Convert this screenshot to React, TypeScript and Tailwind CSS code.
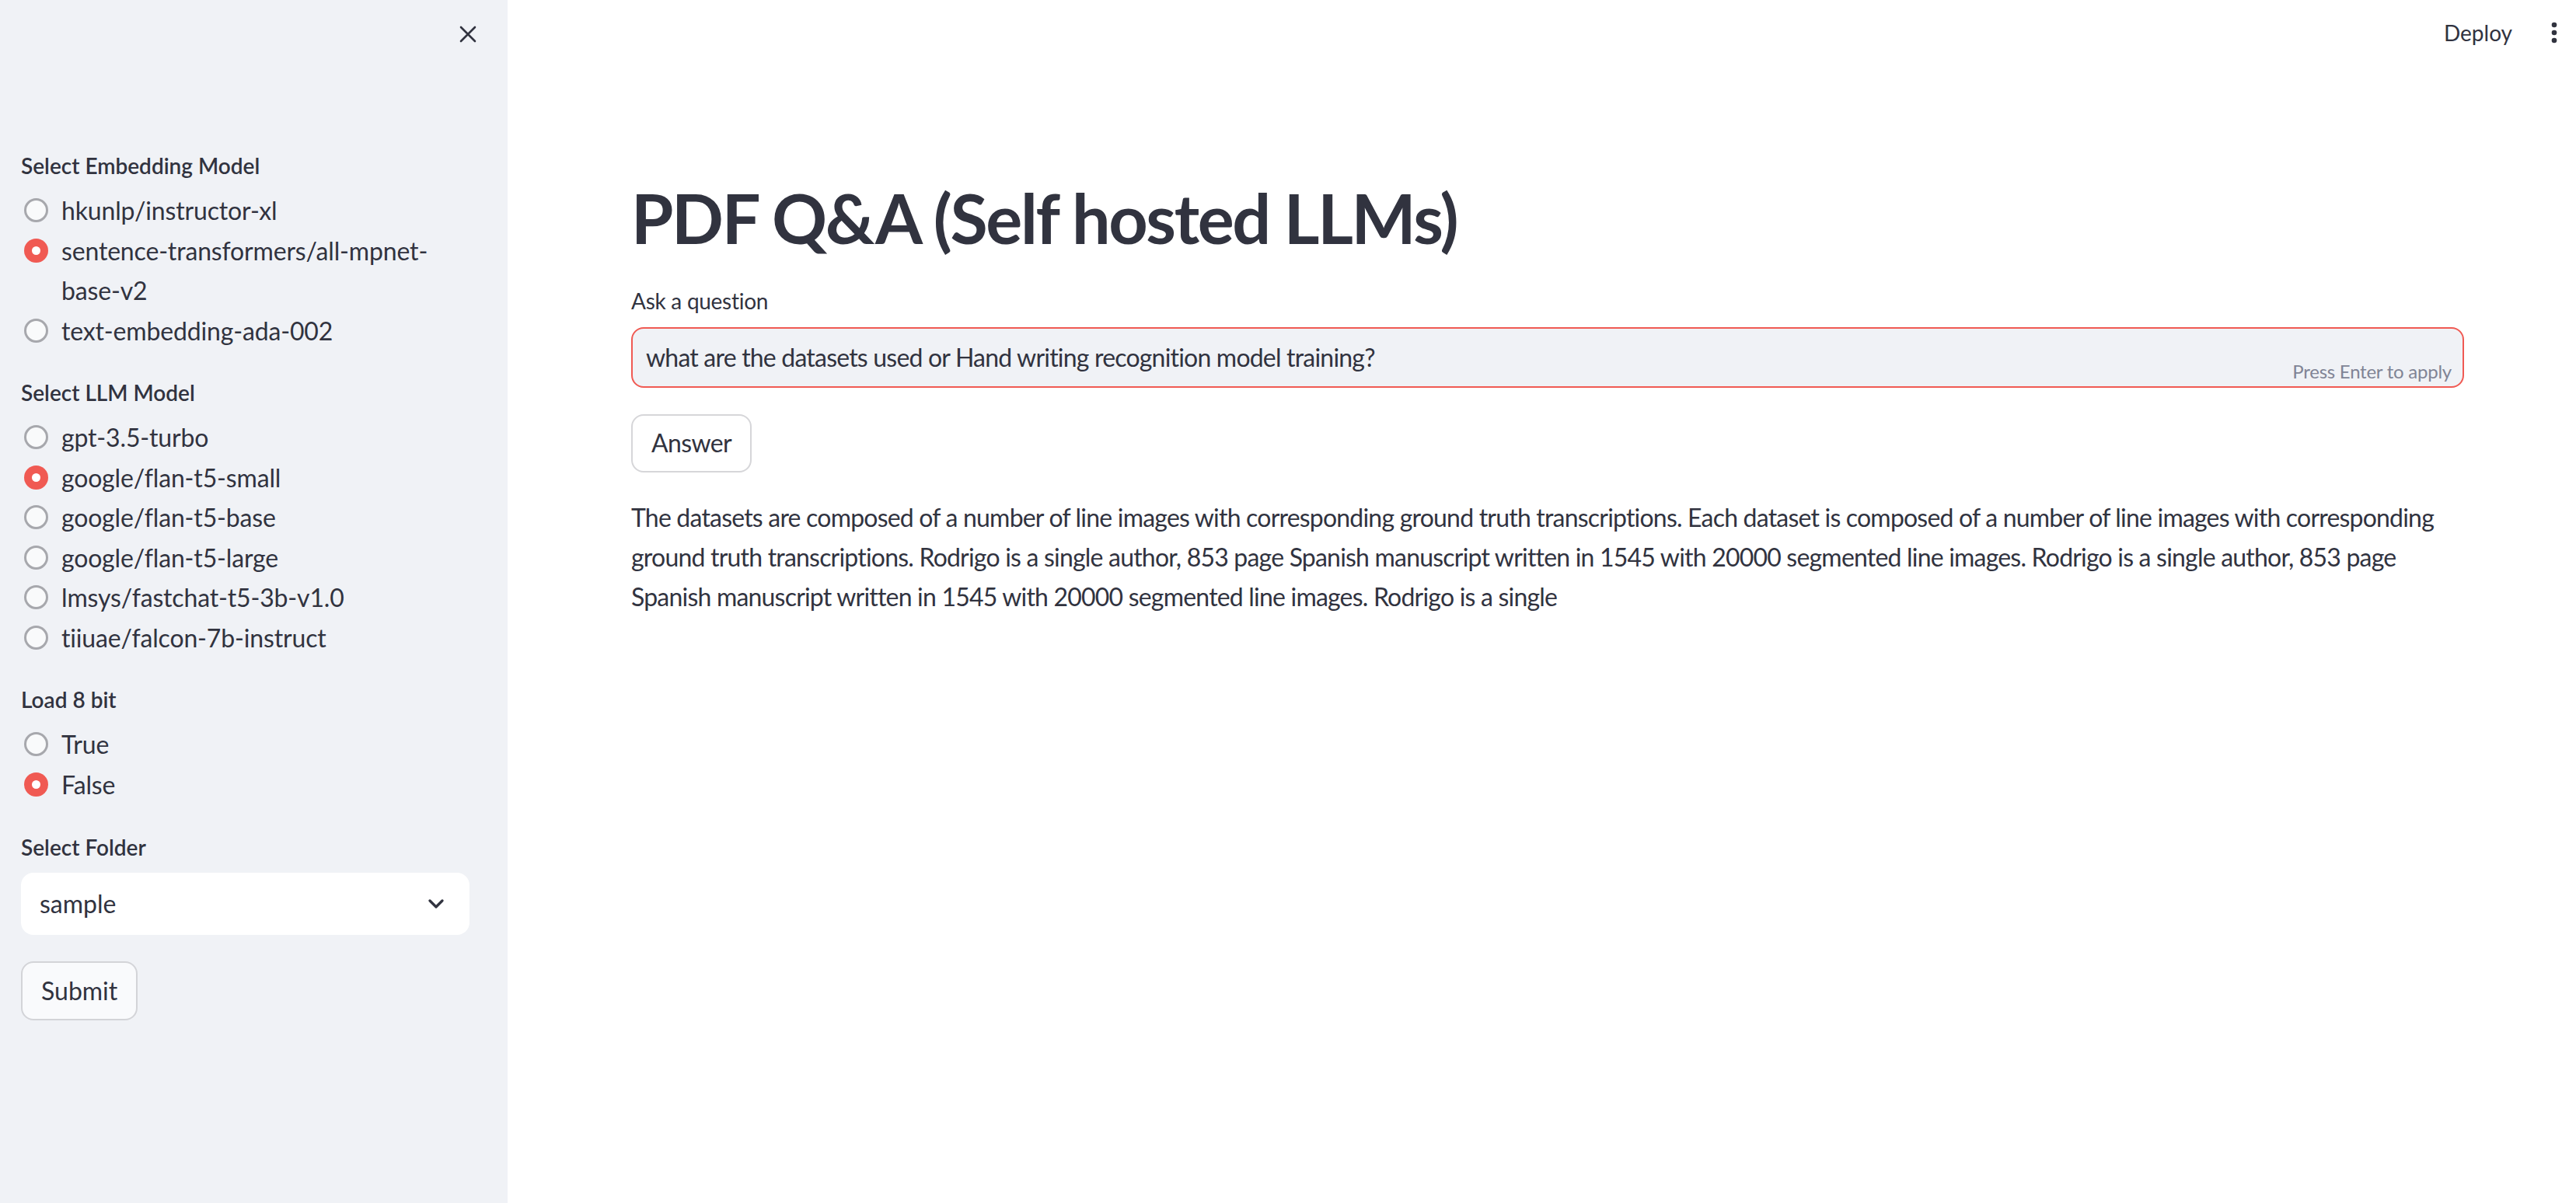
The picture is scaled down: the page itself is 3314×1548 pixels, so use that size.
import React from 'react';

const EMBEDDINGS = ['hkunlp/instructor-xl', 'sentence-transformers/all-mpnet-base-v2', 'text-embedding-ada-002'];
const LLMS = [
  'gpt-3.5-turbo',
  'google/flan-t5-small',
  'google/flan-t5-base',
  'google/flan-t5-large',
  'lmsys/fastchat-t5-3b-v1.0',
  'tiiuae/falcon-7b-instruct',
];

const ANSWER =
  'The datasets are composed of a number of line images with corresponding ground truth transcriptions. Each dataset is composed of a number of line images with corresponding ground truth transcriptions. Rodrigo is a single author, 853 page Spanish manuscript written in 1545 with 20000 segmented line images. Rodrigo is a single author, 853 page Spanish manuscript written in 1545 with 20000 segmented line images. Rodrigo is a single';

const Radio: React.FC<{ label: React.ReactNode; checked?: boolean }> = ({ label, checked }) => (
  <div className="flex items-start">
    <div className="h-[51.5px] flex items-center pl-[4px] pr-[17px] shrink-0">
      {checked ? (
        <span className="w-[31px] h-[31px] rounded-full bg-[#f05a53] flex items-center justify-center">
          <span className="w-[11px] h-[11px] rounded-full bg-white" />
        </span>
      ) : (
        <span className="w-[31px] h-[31px] rounded-full border-[3px] border-[#a7a8ad] bg-[#f9fafb]" />
      )}
    </div>
    <span className="text-[32px] leading-[51.5px] tracking-[-0.005em]">{label}</span>
  </div>
);

const RadioGroup: React.FC<{ title: string; options: React.ReactNode[]; selected: number; first?: boolean }> = ({
  title,
  options,
  selected,
  first,
}) => (
  <div className={first ? '' : 'mt-[34px]'}>
    <div className="text-[28px] leading-[40px] font-semibold">{title}</div>
    <div className="mt-[12px] flex flex-col">
      {options.map((o, i) => (
        <Radio key={i} label={o} checked={i === selected} />
      ))}
    </div>
  </div>
);

const Sidebar: React.FC = () => (
  <aside className="w-[653px] shrink-0 bg-[#f0f2f6] flex flex-col">
    <div className="h-[88px] flex items-center justify-end pr-[40px]">
      <svg width="22" height="22" viewBox="0 0 22 22" fill="none" stroke="#31333F" strokeWidth="2.6" strokeLinecap="round">
        <path d="M2 2l18 18M20 2L2 20" />
      </svg>
    </div>
    <div className="pl-[27px] pr-[49px] pt-[105px]">
      <RadioGroup
        first
        title="Select Embedding Model"
        options={[EMBEDDINGS[0], <>sentence-transformers/all-mpnet-<br />base-v2</>, EMBEDDINGS[2]]}
        selected={1}
      />
      <RadioGroup title="Select LLM Model" options={LLMS} selected={1} />
      <RadioGroup title="Load 8 bit" options={['True', 'False']} selected={1} />

      <div className="mt-[35px]">
        <div className="text-[28px] leading-[40px] font-semibold">Select Folder</div>
        <div className="mt-[13px] h-[80px] rounded-[16px] bg-white flex items-center justify-between pl-[24px] pr-[33px]">
          <span className="text-[32px]">sample</span>
          <svg width="20" height="12" viewBox="0 0 20 12" fill="none" stroke="#31333F" strokeWidth="3.2" strokeLinecap="round" strokeLinejoin="round">
            <path d="M2 2l8 8 8-8" />
          </svg>
        </div>
      </div>

      <button className="mt-[34px] h-[76px] px-[24px] rounded-[16px] border-2 border-[#d3d4d8] bg-[#f9fafc] text-[32px] text-[#31333F]">
        Submit
      </button>
    </div>
  </aside>
);

export default function App() {
  return (
    <div className="flex h-[1548px] w-full bg-white text-[#31333F] font-['Lato',sans-serif] overflow-hidden">
      <Sidebar />
      <main className="flex-1 flex flex-col">
        <header className="h-[84px] flex items-center justify-end pr-[24px] gap-[50px]">
          <span className="text-[28px]">Deploy</span>
          <svg width="8" height="28" viewBox="0 0 8 28" fill="#31333F">
            <circle cx="4" cy="4" r="3.3" />
            <circle cx="4" cy="14" r="3.3" />
            <circle cx="4" cy="24" r="3.3" />
          </svg>
        </header>

        <div className="pl-[159px] pr-[144px]">
          <h1 className="mt-[144px] text-[88px] leading-[105.6px] font-bold tracking-[-0.027em]">PDF Q&amp;A (Self hosted LLMs)</h1>

          <div className="mt-[33px] text-[28px] leading-[40px] tracking-[-0.01em]">Ask a question</div>
          <div className="relative mt-[14px] h-[78px] rounded-[16px] border-2 border-[#f05a53] bg-[#f0f2f6] flex items-center px-[17px]">
            <span className="text-[32px] tracking-[-0.025em]">what are the datasets used or Hand writing recognition model training?</span>
            <span className="absolute right-[14px] bottom-[5px] text-[24px] leading-[28px] tracking-[-0.01em] text-[#808495]">Press Enter to apply</span>
          </div>

          <button className="mt-[34px] h-[75px] px-[24px] rounded-[16px] border-2 border-[#d6d6d9] bg-white text-[32px] tracking-[-0.02em]">
            Answer
          </button>

          <p className="mt-[32px] text-[32px] leading-[51.2px] tracking-[-0.025em]">{ANSWER}</p>
        </div>
      </main>
    </div>
  );
}
